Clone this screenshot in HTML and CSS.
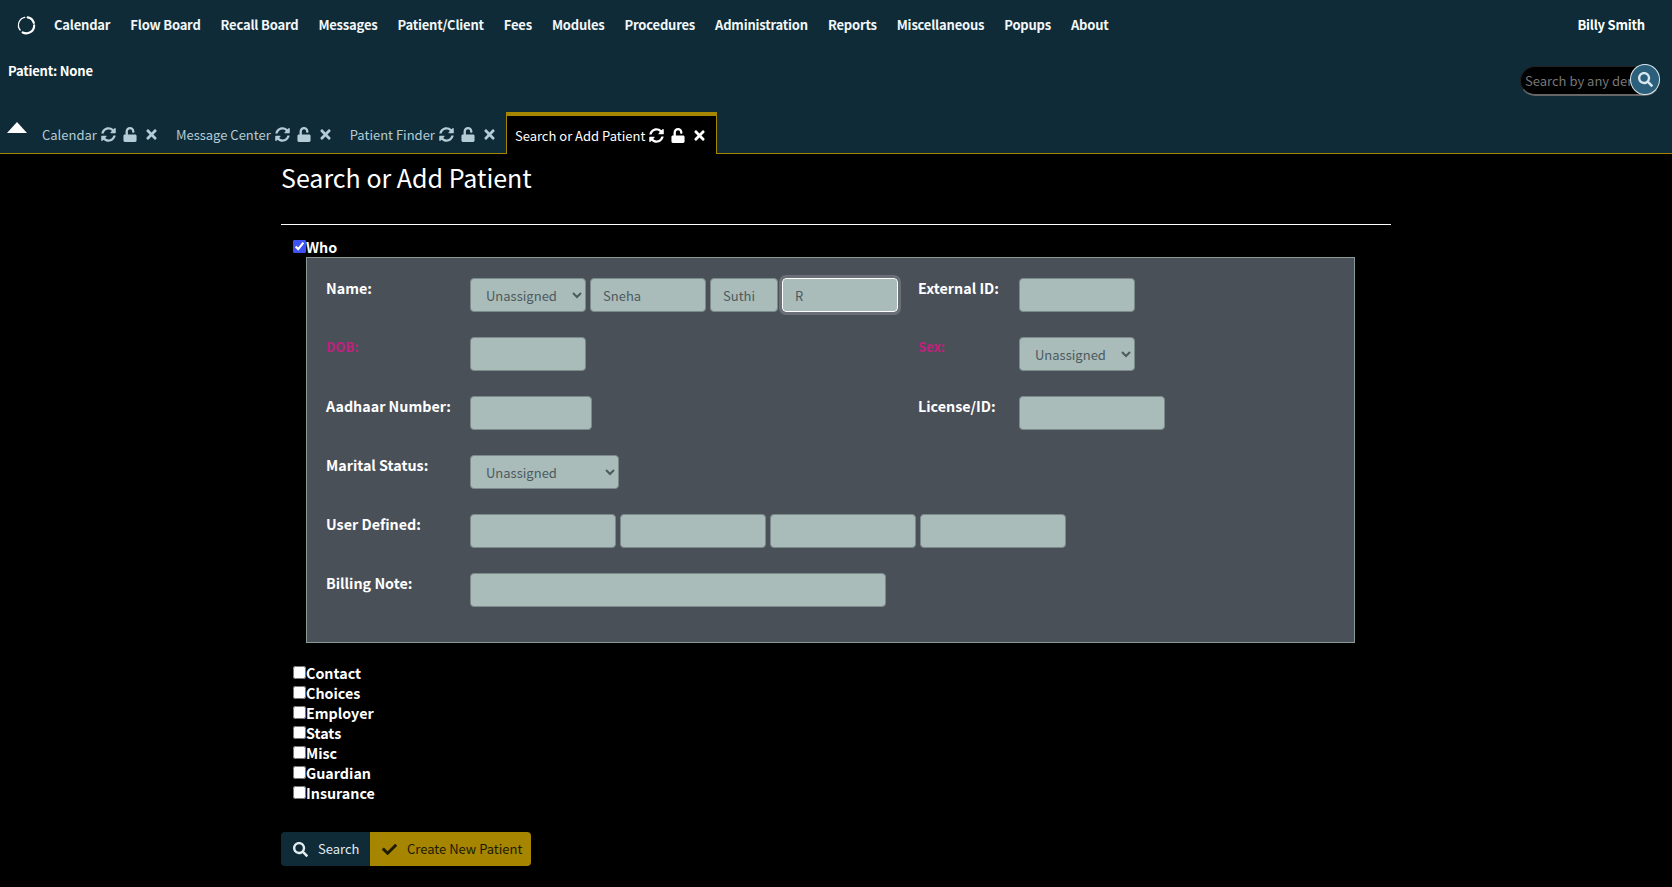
FILE: index.html
```html
<!DOCTYPE html>
<html lang="en">

<head>
  <meta charset="UTF-8">
  <meta name="viewport" content="width=device-width, initial-scale=1.0">
  <title>Search or Add Patient</title>
  <link rel="stylesheet" href="styles.css">
</head>

<body>
  <!-- Shared icons -->
  <svg class="icon-defs" aria-hidden="true">
    <symbol id="i-sync" viewBox="0 0 512 512"><path d="M370.72 133.28C339.458 104.008 298.888 87.962 255.848 88c-77.458.068-144.328 53.178-162.791 126.85-1.344 5.363-6.122 9.15-11.651 9.15H24.103c-7.498 0-13.194-6.807-11.807-14.176C33.933 94.924 134.813 8 256 8c66.448 0 126.791 26.136 171.315 68.685L463.03 40.97C478.149 25.851 504 36.559 504 57.941V192c0 13.255-10.745 24-24 24H345.941c-21.382 0-32.09-25.851-16.971-40.971l41.75-41.749zM32 296h134.059c21.382 0 32.09 25.851 16.971 40.971l-41.75 41.75c31.262 29.273 71.835 45.319 114.876 45.28 77.418-.07 144.315-53.144 162.787-126.849 1.344-5.363 6.122-9.15 11.651-9.15h57.304c7.498 0 13.194 6.807 11.807 14.176C478.067 417.076 377.187 504 256 504c-66.448 0-126.791-26.136-171.315-68.685L48.97 471.03C33.851 486.149 8 475.441 8 454.059V320c0-13.255 10.745-24 24-24z"/></symbol>
    <symbol id="i-unlock" viewBox="0 0 448 512"><path d="M400 256H152V152.9c0-39.6 31.7-72.5 71.3-72.9 40-.4 72.7 32.1 72.7 72v16c0 13.3 10.7 24 24 24h32c13.3 0 24-10.7 24-24v-16C376 68 307.5-.3 223.5 0 139.5.3 72 69.5 72 153.5V256H48c-26.5 0-48 21.5-48 48v160c0 26.5 21.5 48 48 48h352c26.5 0 48-21.5 48-48V304c0-26.5-21.5-48-48-48z"/></symbol>
    <symbol id="i-times" viewBox="0 0 352 512"><path d="M242.72 256l100.07-100.07c12.28-12.28 12.28-32.19 0-44.48l-22.24-22.24c-12.28-12.28-32.19-12.28-44.48 0L176 189.28 75.93 89.21c-12.28-12.28-32.19-12.28-44.48 0L9.21 111.45c-12.28 12.28-12.28 32.19 0 44.48L109.28 256 9.21 356.07c-12.28 12.28-12.28 32.19 0 44.48l22.24 22.24c12.28 12.28 32.2 12.28 44.48 0L176 322.72l100.07 100.07c12.28 12.28 32.2 12.28 44.48 0l22.24-22.24c12.28-12.28 12.28-32.19 0-44.48L242.72 256z"/></symbol>
    <symbol id="i-search" viewBox="0 0 512 512"><path d="M505 442.7L405.3 343c-4.5-4.5-10.6-7-17-7H372c27.6-35.3 44-79.7 44-128C416 93.1 322.9 0 208 0S0 93.1 0 208s93.1 208 208 208c48.3 0 92.7-16.4 128-44v16.3c0 6.4 2.5 12.5 7 17l99.7 99.7c9.4 9.4 24.6 9.4 33.9 0l28.3-28.3c9.4-9.4 9.4-24.6.1-34zM208 336c-70.7 0-128-57.2-128-128 0-70.7 57.2-128 128-128 70.7 0 128 57.2 128 128 0 70.7-57.2 128-128 128z"/></symbol>
    <symbol id="i-check" viewBox="0 0 512 512"><path d="M173.898 439.404l-166.4-166.4c-9.997-9.997-9.997-26.206 0-36.204l36.203-36.204c9.997-9.998 26.207-9.998 36.204 0L192 312.69 432.095 72.596c9.997-9.997 26.207-9.997 36.204 0l36.203 36.204c9.997 9.997 9.997 26.206 0 36.204l-294.4 294.401c-9.998 9.997-26.207 9.997-36.204-.001z"/></symbol>
  </svg>

  <header class="app-header">
    <nav class="main-nav">
      <svg class="logo" viewBox="0 0 24 24" aria-hidden="true">
        <path class="logo-thin" d="M5 18A9.5 9.5 0 0 1 10.5 2.8"/>
        <path class="logo-thick" d="M14 2.8A9.5 9.5 0 0 1 21.4 9.5"/>
        <path class="logo-thick" d="M21.8 12.5A9.5 9.5 0 0 1 8 21"/>
      </svg>
      <a href="#">Calendar</a>
      <a href="#">Flow Board</a>
      <a href="#">Recall Board</a>
      <a href="#">Messages</a>
      <a href="#">Patient/Client</a>
      <a href="#">Fees</a>
      <a href="#">Modules</a>
      <a href="#">Procedures</a>
      <a href="#">Administration</a>
      <a href="#">Reports</a>
      <a href="#">Miscellaneous</a>
      <a href="#">Popups</a>
      <a href="#">About</a>
      <span class="user-name">Billy Smith</span>
    </nav>

    <div class="patient-bar">
      <span class="patient-name">Patient: None</span>
      <div class="search-pill">
        <input type="text" placeholder="Search by any demographics">
        <button type="button" class="search-round"><svg class="icon"><use href="#i-search"/></svg></button>
      </div>
    </div>

    <div class="tab-bar">
      <span class="collapse-arrow"></span>
      <div class="tab">Calendar
        <svg class="icon"><use href="#i-sync"/></svg><svg class="icon icon-lock"><use href="#i-unlock"/></svg><svg class="icon icon-x"><use href="#i-times"/></svg>
      </div>
      <div class="tab">Message Center
        <svg class="icon"><use href="#i-sync"/></svg><svg class="icon icon-lock"><use href="#i-unlock"/></svg><svg class="icon icon-x"><use href="#i-times"/></svg>
      </div>
      <div class="tab">Patient Finder
        <svg class="icon"><use href="#i-sync"/></svg><svg class="icon icon-lock"><use href="#i-unlock"/></svg><svg class="icon icon-x"><use href="#i-times"/></svg>
      </div>
      <div class="tab tab-active">Search or Add Patient
        <svg class="icon"><use href="#i-sync"/></svg><svg class="icon icon-lock"><use href="#i-unlock"/></svg><svg class="icon icon-x"><use href="#i-times"/></svg>
      </div>
    </div>
  </header>

  <main class="page">
    <h1>Search or Add Patient</h1>
    <hr>

    <form>
      <label class="section-toggle"><input type="checkbox" checked>Who</label>

      <div class="panel">
        <label class="field-label">Name:</label>
        <div class="fields">
          <select class="w-116"><option>Unassigned</option></select>
          <input type="text" class="w-116" value="Sneha">
          <input type="text" class="w-68" value="Suthi">
          <input type="text" class="w-116 is-focus" value="R">
        </div>
        <label class="field-label">External ID:</label>
        <div class="fields"><input type="text" class="w-116"></div>

        <label class="field-label is-required">DOB:</label>
        <div class="fields"><input type="text" class="w-116"></div>
        <label class="field-label is-required">Sex:</label>
        <div class="fields"><select class="w-116"><option>Unassigned</option></select></div>

        <label class="field-label">Aadhaar Number:</label>
        <div class="fields"><input type="text" class="w-122"></div>
        <label class="field-label">License/ID:</label>
        <div class="fields"><input type="text" class="w-146"></div>

        <label class="field-label">Marital Status:</label>
        <div class="fields wide"><select class="w-149"><option>Unassigned</option></select></div>

        <label class="field-label">User Defined:</label>
        <div class="fields wide">
          <input type="text" class="w-146">
          <input type="text" class="w-146">
          <input type="text" class="w-146">
          <input type="text" class="w-146">
        </div>

        <label class="field-label">Billing Note:</label>
        <div class="fields wide"><input type="text" class="w-416"></div>
      </div>

      <div class="section-list">
        <label class="section-toggle"><input type="checkbox">Contact</label>
        <label class="section-toggle"><input type="checkbox">Choices</label>
        <label class="section-toggle"><input type="checkbox">Employer</label>
        <label class="section-toggle"><input type="checkbox">Stats</label>
        <label class="section-toggle"><input type="checkbox">Misc</label>
        <label class="section-toggle"><input type="checkbox">Guardian</label>
        <label class="section-toggle"><input type="checkbox">Insurance</label>
      </div>

      <div class="actions">
        <button type="button" class="btn btn-search"><svg class="icon"><use href="#i-search"/></svg>Search</button>
        <button type="button" class="btn btn-create"><svg class="icon"><use href="#i-check"/></svg>Create New Patient</button>
      </div>
    </form>
  </main>
</body>

</html>
```

FILE: styles.css
```css
/* Dark theme patient search page */
* {
  box-sizing: border-box;
}

body {
  font-family: "Noto Sans CJK SC", "Noto Sans", sans-serif;
  margin: 0;
  background: #000;
  color: #fff;
  font-size: 14px;
  line-height: 20px;
  overflow: hidden;
}

.icon-defs {
  display: none;
}

.icon {
  fill: currentColor;
  flex: none;
  width: 16px;
  height: 16px;
}

/* Header */
.app-header {
  height: 154px;
  background: #0f2b38;
  border-bottom: 1px solid #a68500;
  display: flex;
  flex-direction: column;
}

.main-nav {
  display: flex;
  align-items: center;
  height: 50px;
  padding-left: 16px;
  font-size: 13px;
  letter-spacing: -0.2px;
}

.logo {
  width: 20px;
  height: 20px;
  margin-right: 18px;
  fill: none;
  stroke: #fff;
  stroke-linecap: round;
}

.logo-thin {
  stroke-width: 1.5;
}

.logo-thick {
  stroke-width: 2.6;
}

.main-nav a {
  color: #f2f7f9;
  font-weight: 700;
  text-decoration: none;
  margin-right: 20px;
}

.user-name {
  margin-left: auto;
  margin-right: 27px;
  font-weight: 700;
}

.patient-bar {
  display: flex;
  justify-content: space-between;
  height: 62px;
  padding: 11px 12px 0 8px;
}

.patient-name {
  font-weight: 700;
  font-size: 13px;
  letter-spacing: -0.2px;
}

.search-pill {
  position: relative;
  width: 140px;
  height: 30px;
  margin-top: 5px;
}

.search-pill input {
  width: 100%;
  height: 100%;
  padding: 0 26px 0 4px;
  font: inherit;
  font-size: 13px;
  color: #ddd;
  background: #000;
  border: 1px solid #222;
  border-bottom: 2px solid #666;
  border-radius: 15px;
}

.search-pill input::placeholder {
  color: #777;
}

.search-round {
  position: absolute;
  top: -2px;
  right: 0;
  width: 30px;
  height: 31px;
  padding: 0;
  display: flex;
  align-items: center;
  justify-content: center;
  color: #d8e8ee;
  background: #2c5f7c;
  border: 1px solid #d8e8ee;
  border-radius: 50%;
}

.search-round .icon {
  width: 15px;
  height: 15px;
}

/* Tabs */
.tab-bar {
  display: flex;
  align-items: flex-end;
  flex: 1;
  padding-left: 7px;
  color: #b4ccd6;
  font-size: 13px;
}

.collapse-arrow {
  width: 0;
  height: 0;
  margin: 0 7px 20px 0;
  border-left: 10px solid transparent;
  border-right: 10px solid transparent;
  border-bottom: 11px solid #fff;
}

.tab {
  display: flex;
  align-items: center;
  height: 37px;
  padding: 0 11px 0 8px;
  white-space: nowrap;
}

.tab .icon {
  margin-left: 4px;
  width: 15px;
  height: 15px;
}

.tab .icon-lock {
  margin-left: 7px;
  width: 14px;
}

.tab .icon-x {
  margin-left: 9px;
  width: 11px;
}

.tab-active {
  color: #fff;
  background: #000;
  height: 42px;
  padding-top: 1px;
  margin-bottom: -1px;
  border: 1px solid #a68500;
  border-top-width: 4px;
  border-bottom: 0;
}

/* Page body */
.page {
  width: 1110px;
  margin-left: 281px;
}

h1 {
  font-size: 25px;
  font-weight: 400;
  line-height: 34px;
  margin: 6px 0 0;
}

hr {
  margin: 30px 0 0;
  border: 0;
  border-top: 1px solid #fff;
}

form {
  padding: 12px 0 0 12px;
}

.section-toggle {
  display: flex;
  align-items: flex-start;
  font-size: 14.3px;
  font-weight: 700;
  height: 20px;
  accent-color: #3f51f5;
}

.section-toggle input {
  width: 13px;
  height: 13px;
  margin: 3px 0 0;
}

.panel {
  display: grid;
  grid-template-columns: 144px 448px 101px 1fr;
  grid-auto-rows: 34px;
  row-gap: 25px;
  width: 1049px;
  height: 386px;
  margin-left: 13px;
  padding: 20px 19px;
  background: #4a5058;
  border: 1px solid #8a9a98;
}

.field-label {
  font-weight: 700;
  font-size: 14.3px;
  line-height: 20px;
}

.field-label.is-required {
  color: #c01f7e;
  font-size: 13px;
}

.fields {
  display: flex;
  gap: 4px;
}

.wide {
  grid-column: 2 / 5;
}

.fields input,
.fields select {
  height: 34px;
  padding: 0 12px;
  font: inherit;
  font-size: 13px;
  color: #4d5a5e;
  background: #a9bcba;
  border: 1px solid #7d8a8c;
  border-radius: 4px;
}

.fields select {
  padding: 0 0 0 11px;
}

.is-focus {
  outline: 3px solid #6b7078;
  outline-offset: 0;
  border-color: #fff !important;
}

.w-68 { width: 68px; }
.w-116 { width: 116px; }
.w-122 { width: 122px; }
.w-146 { width: 146px; }
.w-149 { width: 149px; }
.w-416 { width: 416px; }

.section-list {
  margin-top: 20px;
}

.actions {
  display: flex;
  margin: 29px 0 0 -12px;
}

.btn {
  display: flex;
  align-items: center;
  height: 34px;
  font: inherit;
  font-size: 13px;
  white-space: nowrap;
  border: 0;
}

.btn .icon {
  width: 15px;
  height: 15px;
  margin-right: 10px;
}

.btn-search {
  width: 89px;
  padding: 0 12px;
  color: #e3edf1;
  background: #0f2b38;
  border-radius: 4px 0 0 4px;
}

.btn-create {
  width: 161px;
  padding: 0 12px;
  color: #1d1a00;
  background: #a68500;
  border-radius: 0 4px 4px 0;
}
```
